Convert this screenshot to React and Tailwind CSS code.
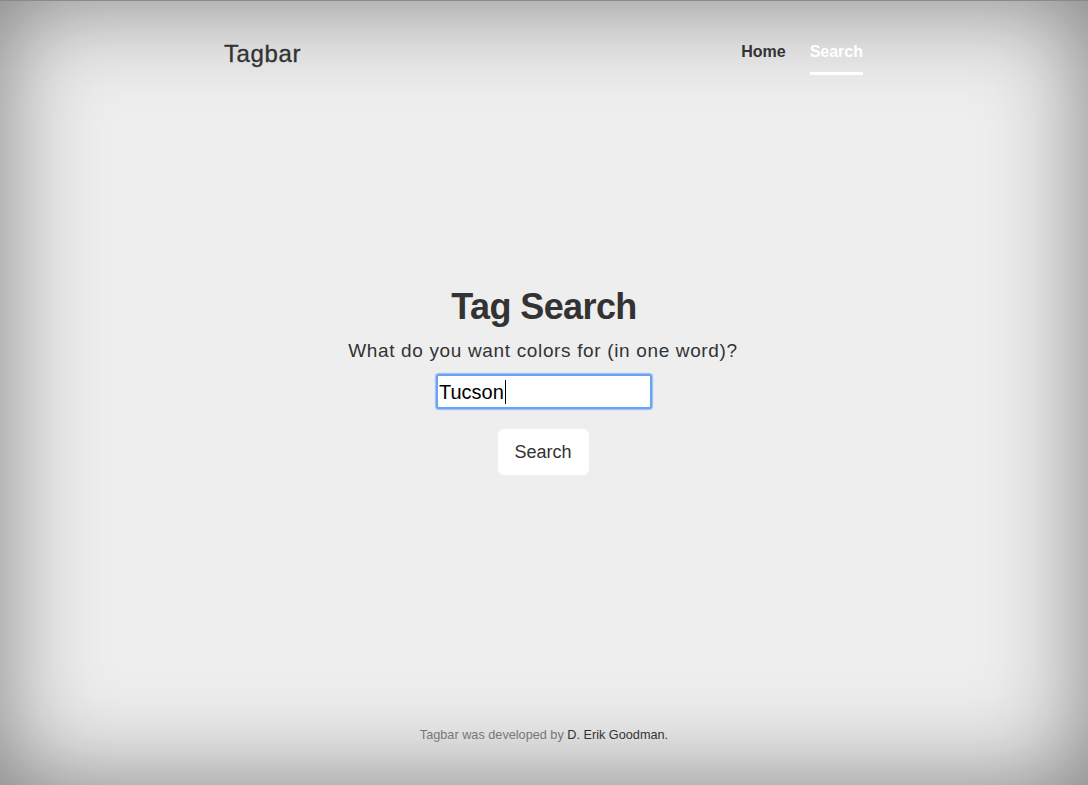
export default function App() {
  return (
    <div
      className="w-full h-[785px] bg-[#eeeeee] text-[#333333] flex flex-col border-t border-[#8a8a8a] shadow-[inset_0_0_100px_rgba(0,0,0,0.48)] overflow-hidden"
      style={{ fontFamily: '"Liberation Sans", Arial, sans-serif' }}
    >
      <header className="w-[640px] mx-auto flex justify-between items-start pt-[41px]">
        <h3 className="text-[24px] leading-[24px] tracking-[0.6px] text-[#333333] [-webkit-text-stroke:0.35px_#333333]">Tagbar</h3>
        <nav className="flex gap-[24px] mt-[2px] pr-[1px]">
          <a className="text-[16px] leading-[16px] font-bold text-[#333333] pb-[12px] border-b-[3px] border-transparent">Home</a>
          <a className="text-[16px] leading-[16px] font-bold text-white pb-[12px] border-b-[3px] border-white">Search</a>
        </nav>
      </header>

      <main className="flex flex-col items-center mt-[212px]">
        <h1 className="text-[36px] leading-[40px] font-bold tracking-[-0.6px] text-[#333333]">Tag Search</h1>
        <p className="mt-[12px] mr-[2px] text-[19px] leading-[24px] tracking-[0.65px] text-[#333333]">
          What do you want colors for (in one word)?
        </p>
        <div className="mt-[11px] w-[216px] h-[35px] bg-white border-2 border-[#6aa3f3] rounded-[3px] shadow-[0_0_1px_1px_rgba(140,185,250,0.9)] flex items-center pl-[1px]">
          <span className="text-[20px] leading-[28px] text-black">Tucson</span>
          <span className="w-px h-[24px] bg-black ml-[1px]"></span>
        </div>
        <button className="mt-[20px] mr-[2px] w-[91px] h-[46px] bg-white rounded-[6px] flex items-center justify-center text-[18px] leading-[20px] text-[#333333]">
          Search
        </button>
      </main>

      <footer className="mt-auto pb-[40px] text-center text-[12.7px] leading-[20px] text-[#777777]">
        Tagbar was developed by <a className="text-[#333333]">D. Erik Goodman.</a>
      </footer>
    </div>
  );
}
